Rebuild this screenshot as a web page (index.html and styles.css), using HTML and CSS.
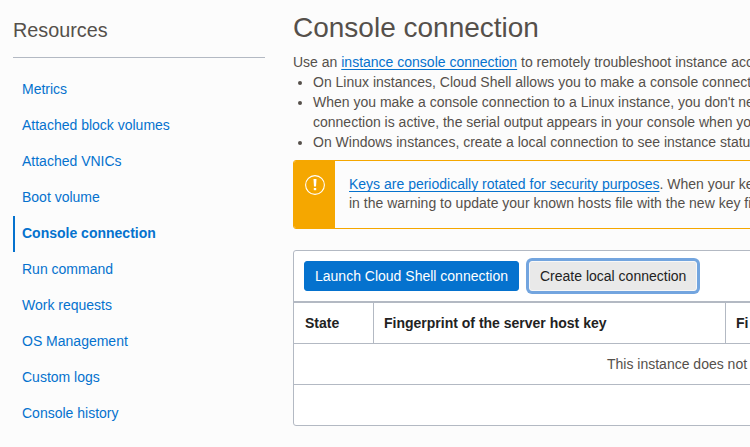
FILE: index.html
```html
<!DOCTYPE html>
<html lang="en">
<head>
<meta charset="utf-8">
<title>Console connection</title>
<link rel="stylesheet" href="styles.css">
</head>
<body>
<aside class="sidebar">
  <h2 class="sidebar-title">Resources</h2>
  <nav class="nav">
    <a class="nav-item">Metrics</a>
    <a class="nav-item">Attached block volumes</a>
    <a class="nav-item">Attached VNICs</a>
    <a class="nav-item">Boot volume</a>
    <a class="nav-item active">Console connection</a>
    <a class="nav-item">Run command</a>
    <a class="nav-item">Work requests</a>
    <a class="nav-item">OS Management</a>
    <a class="nav-item">Custom logs</a>
    <a class="nav-item">Console history</a>
  </nav>
</aside>
<main class="main">
  <h1 class="title">Console connection</h1>
  <p class="intro">Use an <a class="link">instance console connection</a> to remotely troubleshoot instance acc</p>
  <ul class="notes">
    <li>On Linux instances, Cloud Shell allows you to make a console connect</li>
    <li>When you make a console connection to a Linux instance, you don't ne<br>connection is active, the serial output appears in your console when yo</li>
    <li>On Windows instances, create a local connection to see instance statu</li>
  </ul>
  <div class="alert">
    <div class="alert-icon">
      <svg width="20" height="20" viewBox="0 0 20 20">
        <circle cx="10" cy="10" r="9.4" fill="none" stroke="#fff" stroke-width="1.1"/>
        <path d="M8.5 4h3l-.5 7.5H9z" fill="#fff"/>
        <rect x="8.8" y="13" width="2.4" height="2.2" fill="#fff"/>
      </svg>
    </div>
    <p class="alert-text"><a class="link">Keys are periodically rotated for security purposes</a>. When your ke<br>in the warning to update your known hosts file with the new key fi</p>
  </div>
  <section class="panel">
    <div class="toolbar">
      <button class="btn primary">Launch Cloud Shell connection</button>
      <button class="btn secondary">Create local connection</button>
    </div>
    <div class="row head">
      <div class="cell">State</div>
      <div class="cell">Fingerprint of the server host key</div>
      <div class="cell">Fi</div>
    </div>
    <div class="row empty">This instance does not</div>
    <div class="row foot"></div>
  </section>
</main>
</body>
</html>
```
FILE: styles.css
```css
* { box-sizing: border-box; }
body {
  margin: 0;
  width: 750px;
  height: 447px;
  overflow: hidden;
  display: flex;
  background: #fcfcfc;
  color: #55504b;
  font: 14px/20px "Liberation Sans", Arial, sans-serif;
  white-space: nowrap;
}
h1, h2, p, ul { margin: 0; font-weight: 400; }
.sidebar { width: 252px; margin-left: 13px; flex: none; }
.sidebar-title {
  height: 58px;
  padding-top: 18px;
  border-bottom: 1px solid #b3b9c3;
  font-size: 19.8px;
  line-height: 24px;
}
.nav { display: flex; flex-direction: column; padding-top: 14px; }
.nav-item {
  height: 36px;
  padding-left: 7px;
  border-left: 2px solid transparent;
  line-height: 35px;
  color: #0572ce;
}
.nav-item.active { border-color: #0572ce; font-weight: 700; }
.main { width: 457px; margin-left: 28px; overflow: hidden; flex: none; }
.title { padding-top: 11px; height: 52px; font-size: 28px; line-height: 34px; }
.link {
  color: #0572ce;
  text-decoration: underline;
  text-decoration-thickness: 1px;
  text-underline-offset: 2px;
  text-decoration-skip-ink: none;
}
.notes { padding-left: 20px; }
.alert {
  display: flex;
  width: 520px;
  height: 69px;
  margin-top: 8px;
  border: 1px solid #f5a700;
  border-radius: 3px;
  overflow: hidden;
}
.alert-icon { width: 41px; padding: 14px 0 0 11px; background: #f5a700; }
.alert-icon svg { display: block; }
.alert-text { padding: 14px 0 0 14px; line-height: 19px; }
.panel {
  width: 780px;
  height: 176px;
  margin-top: 21px;
  border: 1px solid #b3b9c3;
  border-radius: 3px;
  background: #fff;
}
.toolbar {
  display: flex;
  gap: 10px;
  height: 52px;
  padding: 10px;
  border-bottom: 2px solid #b3b9c3;
}
.btn {
  height: 30px;
  padding: 0 10px;
  border: 1px solid;
  border-radius: 3px;
  font: inherit;
}
.primary { width: 215px; border-color: #0572ce; background: #0572ce; color: #fff; }
.secondary {
  width: 168px;
  border-color: #f8f8f8;
  background: #e9e9e9;
  color: #222;
  box-shadow: 0 0 0 3px #73a5df;
}
.row { height: 41px; line-height: 40px; border-bottom: 1px solid #b3b9c3; }
.head { display: flex; color: #222; font-weight: 700; }
.cell { flex: none; padding-left: 10px; border-left: 1px solid #b3b9c3; width: 352px; }
.cell:first-child { width: 79px; padding-left: 11px; border: 0; }
.empty { padding-left: 313px; }
.foot { height: 40px; border: 0; }
```
